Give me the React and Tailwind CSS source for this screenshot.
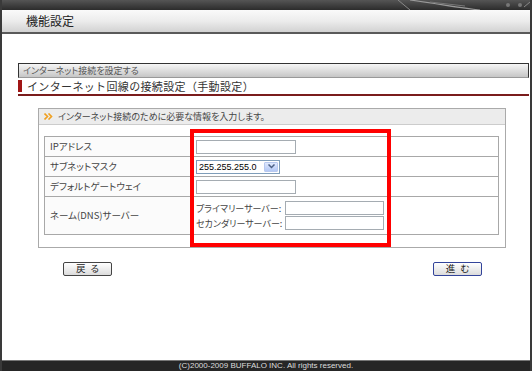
const jp = "font-['Noto_Sans_CJK_JP',sans-serif] [font-feature-settings:'palt']";

const Row = ({ label, h, children, last }) => (
  <div className={`flex ${h} ${last ? '' : 'border-b border-[#a8a8a8]'}`}>
    <div className="w-[146px] shrink-0 flex items-center pl-[5px] border-r border-[#a8a8a8] bg-[#fbfbfb] text-[9.5px] text-[#444]">
      {label}
    </div>
    <div className="flex-1 flex flex-col justify-center pl-[5px]">{children}</div>
  </div>
);

const TextBox = ({ w = 'w-[100px]' }) => (
  <div className={`${w} h-[14px] border border-[#a5acb2] bg-white`} />
);

const Btn = ({ label, focus }) => (
  <button
    className={`w-[49px] h-[14px] rounded-[2px] border ${focus ? 'border-[#33449a]' : 'border-[#444]'} bg-gradient-to-b from-white to-[#dcdcdc] text-[9.5px] leading-none text-[#222] tracking-[5px] pl-[5px] ${jp}`}
  >
    {label}
  </button>
);

export default function App() {
  return (
    <div className={`relative w-[532px] h-[371px] flex flex-col bg-white border-x-2 border-[#3a3a3a] overflow-hidden ${jp}`}>
      {/* top dark strip */}
      <div className="relative h-[10px] bg-gradient-to-b from-[#555] to-[#2c2c2c]">
        <svg className="absolute right-0 top-0" width="160" height="10" viewBox="0 0 160 10">
          <path d="M28 0 L40 10" stroke="#888" strokeWidth="1" />
          <path d="M40 0 C70 4 90 8 110 10" stroke="#9a9a9a" strokeWidth="1.2" fill="none" />
          <path d="M60 2 L95 6" stroke="#777" strokeWidth="1" />
          <circle cx="138" cy="5" r="2" fill="#777" />
          <circle cx="150" cy="5" r="2" fill="#777" />
          <path d="M154 7 L160 2" stroke="#888" strokeWidth="1" />
        </svg>
      </div>

      {/* title bar */}
      <div className="h-[24px] flex items-center pl-[24px] bg-gradient-to-b from-[#fafafa] via-[#ececec] to-[#d2d2d2] border-b-2 border-[#5a5a5a]">
        <span className="text-[12px] text-[#222] leading-none">機能設定</span>
      </div>

      {/* content */}
      <div className="flex-1 flex flex-col pl-[16px] pr-[1px] pt-[29px]">
        <div className="h-[15px] flex items-center pl-[4px] border border-[#333] border-b-[#999] bg-gradient-to-b from-[#f6f6f6] to-[#c6c6c6] text-[9px] text-[#555] leading-none">
          インターネット接続を設定する
        </div>
        <div className="h-[18px] flex items-stretch border-b-2 border-[#7a1c1c]">
          <div className="w-[4px] bg-[#a01515] my-[2px]" />
          <div className="pl-[5px] flex items-center text-[11px] tracking-[0.35px] text-[#333] leading-none [font-feature-settings:normal]">
            インターネット回線の接続設定（手動設定）
          </div>
        </div>

        {/* form box */}
        <div className="ml-[20px] mt-[12px] w-[468px] h-[140px] border border-[#aaa] bg-white">
          <div className="h-[16px] flex items-center gap-[5px] pl-[5px] bg-[#ececec] border-b border-[#ccc]">
            <svg width="9" height="7" viewBox="0 0 9 7">
              <path d="M0.5 0.5 L3.5 3.5 L0.5 6.5 M4.5 0.5 L7.5 3.5 L4.5 6.5" stroke="#f0a020" strokeWidth="1.6" fill="none" />
            </svg>
            <span className="text-[9px] text-[#444] leading-none">インターネット接続のために必要な情報を入力します。</span>
          </div>

          <div className="mt-[11px] ml-[5px] w-[455px] border border-[#a8a8a8]">
            <Row label="IPアドレス" h="h-[20px]">
              <TextBox />
            </Row>
            <Row label="サブネットマスク" h="h-[20px]">
              <div className="w-[84px] h-[14px] flex border border-[#7f9db9] bg-white">
                <span className="flex-1 pl-[2px] text-[9px] leading-[12px] text-black font-['Liberation_Sans',sans-serif]">255.255.255.0</span>
                <span className="w-[14px] m-[1px] flex items-center justify-center rounded-[1px] bg-gradient-to-b from-[#e0e9fd] to-[#b4c8f5] border border-[#b9c9ef]">
                  <svg width="7" height="5" viewBox="0 0 7 5">
                    <path d="M0.5 0.5 L3.5 3.5 L6.5 0.5" stroke="#4d6185" strokeWidth="1.5" fill="none" />
                  </svg>
                </span>
              </div>
            </Row>
            <Row label="デフォルトゲートウェイ" h="h-[20px]">
              <TextBox />
            </Row>
            <Row label="ネーム(DNS)サーバー" h="h-[37px]" last>
              <div className="flex flex-col gap-[1px]">
                <div className="flex items-center">
                  <span className="w-[89px] text-[9px] text-[#444] leading-none">プライマリーサーバー:</span>
                  <TextBox w="w-[99px]" />
                </div>
                <div className="flex items-center">
                  <span className="w-[89px] text-[9px] text-[#444] leading-none">セカンダリーサーバー:</span>
                  <TextBox w="w-[99px]" />
                </div>
              </div>
            </Row>
          </div>
        </div>

        <div className="ml-[45px] mr-[47px] mt-[14px] flex justify-between">
          <Btn label="戻る" />
          <Btn label="進む" focus />
        </div>
      </div>

      {/* footer */}
      <div className="h-[11px] flex items-center justify-center bg-[#262626] border-t border-[#777] text-[8px] text-[#ddd] leading-none font-['Liberation_Sans',sans-serif]">
        (C)2000-2009 BUFFALO INC. All rights reserved.
      </div>

      {/* red highlight overlay */}
      <div className="absolute left-[188px] top-[129px] w-[201px] h-[118px] border-4 border-[#f00]" />
    </div>
  );
}
